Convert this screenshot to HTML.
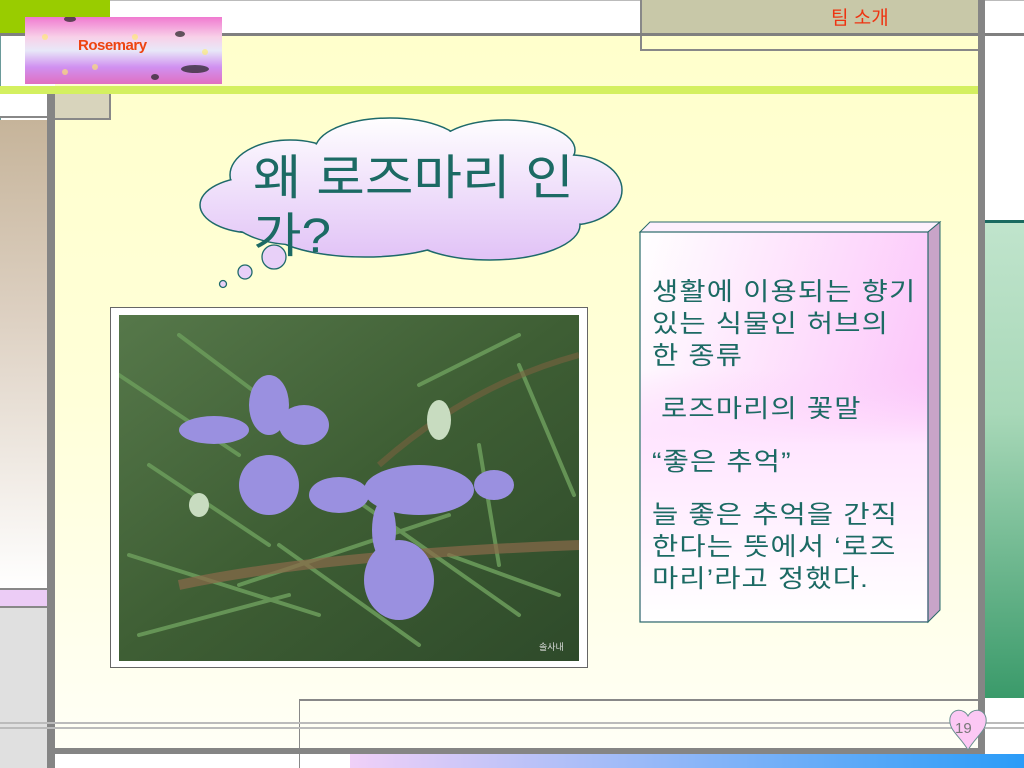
<!DOCTYPE html>
<html><head><meta charset="utf-8"><style>
*{margin:0;padding:0;box-sizing:border-box}
body{width:1024px;height:768px;position:relative;overflow:hidden;background:#fff;font-family:"Liberation Sans","Noto Sans CJK KR",sans-serif}
.a{position:absolute}
.t{color:#1c6a64;font-family:"Liberation Sans","Noto Sans CJK KR",sans-serif}
</style></head><body>
<div class="a" style="left:55px;top:36px;width:925px;height:712px;background:linear-gradient(180deg,#ffffcc 0%,#ffffd8 50%,#fffff6 100%)"></div>
<div class="a" style="left:0;top:0;width:110px;height:33px;background:#99cc00"></div>
<div class="a" style="left:110px;top:0;width:914px;height:1px;background:#bbb"></div>
<div class="a" style="left:0;top:33px;width:1024px;height:3px;background:#808080"></div>
<div class="a" style="left:0;top:36px;width:55px;height:50px;background:#fff"></div>
<div class="a" style="left:0;top:36px;width:1px;height:730px;background:#6a9a9a"></div>
<div class="a" style="left:640px;top:0;width:338px;height:33px;background:#c8c8a8;border-left:2px solid #888"></div>
<div class="a t" style="left:831px;top:3px;font-size:19px;color:#ee3311">팀 소개</div>
<div class="a" style="left:640px;top:36px;width:338px;height:15px;border-left:2px solid #888;border-bottom:2px solid #888"></div>
<div class="a" style="left:25px;top:17px;width:197px;height:67px;background:linear-gradient(180deg,#f07ad0 0%,#f8d0e8 30%,#e8e8f8 50%,#d090f0 75%,#e070c0 100%)"></div>
<svg class="a" style="left:25px;top:17px" width="197" height="67"><g fill="#222" opacity=".7"><ellipse cx="45" cy="2" rx="6" ry="3"/><ellipse cx="155" cy="17" rx="5" ry="3"/><ellipse cx="170" cy="52" rx="14" ry="4"/><ellipse cx="130" cy="60" rx="4" ry="3"/></g><g fill="#ffee66" opacity=".6"><circle cx="20" cy="20" r="3"/><circle cx="70" cy="50" r="3"/><circle cx="110" cy="20" r="3"/><circle cx="180" cy="35" r="3"/><circle cx="40" cy="55" r="3"/></g></svg>
<div class="a" style="left:78px;top:37px;font-size:15px;font-weight:bold;color:#ee4411;letter-spacing:-0.5px">Rosemary</div>
<div class="a" style="left:0;top:86px;width:1024px;height:8px;background:#d4f060"></div>
<div class="a" style="left:0;top:94px;width:47px;height:24px;background:#fff;border-bottom:2px solid #888"></div>
<div class="a" style="left:55px;top:94px;width:56px;height:26px;background:#d8d4bc;border-right:2px solid #888;border-bottom:2px solid #888"></div>
<div class="a" style="left:47px;top:94px;width:8px;height:674px;background:#858585"></div>
<div class="a" style="left:0;top:120px;width:47px;height:470px;background:linear-gradient(180deg,#c6b49a 0%,#dccfc0 40%,#fff 100%)"></div>
<div class="a" style="left:0;top:588px;width:47px;height:20px;background:#ecccf6;border-top:2px solid #888;border-bottom:2px solid #888"></div>
<div class="a" style="left:0;top:608px;width:47px;height:160px;background:#e0e0e0"></div>
<div class="a" style="left:978px;top:0;width:7px;height:768px;background:#858585"></div>
<div class="a" style="left:985px;top:36px;width:39px;height:186px;background:#fff"></div>
<div class="a" style="left:985px;top:220px;width:39px;height:3px;background:#1a6a60"></div>
<div class="a" style="left:985px;top:223px;width:39px;height:475px;background:linear-gradient(180deg,#c0e4cc 0%,#a8d8b8 40%,#3a9a6a 100%)"></div>
<div class="a" style="left:299px;top:699px;width:680px;height:2px;background:#888"></div>
<div class="a" style="left:299px;top:699px;width:1px;height:69px;background:#888"></div>
<div class="a" style="left:0;top:722px;width:1024px;height:2px;background:#bbb"></div>
<div class="a" style="left:0;top:727px;width:1024px;height:2px;background:#bbb"></div>
<div class="a" style="left:55px;top:748px;width:930px;height:6px;background:#858585"></div>
<div class="a" style="left:350px;top:754px;width:674px;height:14px;background:linear-gradient(90deg,#f0d0f8,#2a9cf8)"></div>
<svg class="a" style="left:946px;top:706px" width="44" height="46" viewBox="0 0 44 46">
<path d="M22 44 C14 30 2 24 4 12 C6 2 18 2 22 10 C26 2 38 2 40 12 C42 24 30 30 22 44Z" fill="#fcc8f4" stroke="#6a9090" stroke-width="1"/>
<text x="9" y="27" font-size="15" fill="#777" font-family="Liberation Sans">19</text></svg>
<svg class="a" style="left:190px;top:105px" width="440" height="190" viewBox="0 0 440 190">
<defs><linearGradient id="cg" gradientUnits="userSpaceOnUse" x1="0" y1="10" x2="0" y2="160"><stop offset="0" stop-color="#fff"/><stop offset="1" stop-color="#e0c0f6"/></linearGradient></defs>
<g stroke="#1e6a6a" stroke-width="1.5" fill="url(#cg)">
<ellipse cx="100" cy="70" rx="60" ry="35"/><ellipse cx="200" cy="45" rx="75" ry="32"/><ellipse cx="315" cy="45" rx="70" ry="30"/>
<ellipse cx="380" cy="85" rx="52" ry="35"/><ellipse cx="300" cy="120" rx="90" ry="35"/><ellipse cx="175" cy="120" rx="100" ry="32"/>
<ellipse cx="65" cy="100" rx="55" ry="28"/><ellipse cx="110" cy="110" rx="70" ry="30"/>
</g>
<g fill="url(#cg)">
<ellipse cx="100" cy="70" rx="59" ry="34"/><ellipse cx="200" cy="45" rx="74" ry="31"/><ellipse cx="315" cy="45" rx="69" ry="29"/>
<ellipse cx="380" cy="85" rx="51" ry="34"/><ellipse cx="300" cy="120" rx="89" ry="34"/><ellipse cx="175" cy="120" rx="99" ry="31"/>
<ellipse cx="65" cy="100" rx="54" ry="27"/><ellipse cx="110" cy="110" rx="69" ry="29"/><rect x="90" y="50" width="270" height="80"/>
</g>
<g stroke="#1e6a6a" stroke-width="1.3" fill="#e8d0f8">
<circle cx="84" cy="152" r="12"/><circle cx="55" cy="167" r="7"/><circle cx="33" cy="179" r="3.5"/></g>
</svg>
<div class="a t" style="left:253px;top:150px;font-size:48px;line-height:58px;width:420px;transform:scale(1.1,1);transform-origin:0 0;white-space:nowrap">왜 로즈마리 인<br>가?</div>
<div class="a" style="left:110px;top:307px;width:478px;height:361px;background:#fff;border:1px solid #666"></div>
<svg class="a" style="left:119px;top:315px" width="460" height="346" viewBox="0 0 460 346">
<defs><linearGradient id="pg" x1="0" y1="0" x2="1" y2="1"><stop offset="0" stop-color="#56784a"/><stop offset=".5" stop-color="#3e5e34"/><stop offset="1" stop-color="#2e4a2a"/></linearGradient></defs>
<rect width="460" height="346" fill="url(#pg)"/>
<g stroke="#6a9a5a" stroke-width="4" stroke-linecap="round" opacity=".9">
<line x1="0" y1="60" x2="120" y2="140"/><line x1="10" y1="240" x2="200" y2="300"/><line x1="120" y1="270" x2="330" y2="200"/>
<line x1="230" y1="180" x2="400" y2="300"/><line x1="300" y1="70" x2="400" y2="20"/><line x1="400" y1="50" x2="455" y2="180"/>
<line x1="30" y1="150" x2="150" y2="230"/><line x1="160" y1="230" x2="300" y2="330"/><line x1="360" y1="130" x2="380" y2="250"/>
<line x1="20" y1="320" x2="170" y2="280"/><line x1="330" y1="240" x2="440" y2="280"/><line x1="60" y1="20" x2="180" y2="110"/></g>
<path d="M60 270 Q200 240 460 230" stroke="#8a6a4a" stroke-width="10" fill="none" opacity=".7"/>
<path d="M260 150 Q350 70 460 40" stroke="#7a6040" stroke-width="6" fill="none" opacity=".6"/>
<g fill="#9a90e0">
<ellipse cx="95" cy="115" rx="35" ry="14"/><ellipse cx="150" cy="90" rx="20" ry="30"/><ellipse cx="185" cy="110" rx="25" ry="20"/>
<ellipse cx="150" cy="170" rx="30" ry="30"/><ellipse cx="220" cy="180" rx="30" ry="18"/><ellipse cx="300" cy="175" rx="55" ry="25"/>
<ellipse cx="280" cy="265" rx="35" ry="40"/><ellipse cx="265" cy="215" rx="12" ry="30"/><ellipse cx="375" cy="170" rx="20" ry="15"/></g>
<g fill="#c8dcc0"><ellipse cx="320" cy="105" rx="12" ry="20"/><ellipse cx="80" cy="190" rx="10" ry="12"/></g>
<text x="420" y="335" font-size="9" fill="#ddd">솔사내</text>
</svg>
<svg class="a" style="left:638px;top:220px" width="306" height="406" viewBox="0 0 306 406">
<defs><linearGradient id="bg" x1="0" y1="0" x2="1" y2=".4"><stop offset="0" stop-color="#fff"/><stop offset="1" stop-color="#fcc6fa"/></linearGradient>
<linearGradient id="bg2" x1="0" y1="0" x2="0" y2="1"><stop offset="0" stop-color="#fcd0fa" stop-opacity="0"/><stop offset=".3" stop-color="#ffe6ff"/><stop offset="1" stop-color="#fff"/></linearGradient></defs>
<path d="M2 12 L12 2 L302 2 L290 12Z" fill="#fdf0fd" stroke="#2a6a6a" stroke-width="1"/>
<path d="M290 12 L302 2 L302 390 L290 402Z" fill="#c8a4c8" stroke="#2a6a6a" stroke-width="1"/>
<rect x="2" y="12" width="288" height="390" fill="url(#bg)" stroke="#2a6a6a" stroke-width="1.2"/>
<rect x="3" y="150" width="286" height="251" fill="url(#bg2)"/>
</svg>
<div class="a t" style="left:652px;top:276px;font-size:25px;line-height:32px;width:290px;white-space:nowrap;letter-spacing:1px;transform:scale(1.14,1);transform-origin:0 0">
<div>생활에 이용되는 향기<br>있는 식물인 허브의<br>한 종류</div>
<div style="margin-top:21px">&nbsp;로즈마리의 꽃말</div>
<div style="margin-top:21px">“좋은 추억”</div>
<div style="margin-top:21px">늘 좋은 추억을 간직<br>한다는 뜻에서 ‘로즈<br>마리’라고 정했다.</div>
</div>
</body></html>
